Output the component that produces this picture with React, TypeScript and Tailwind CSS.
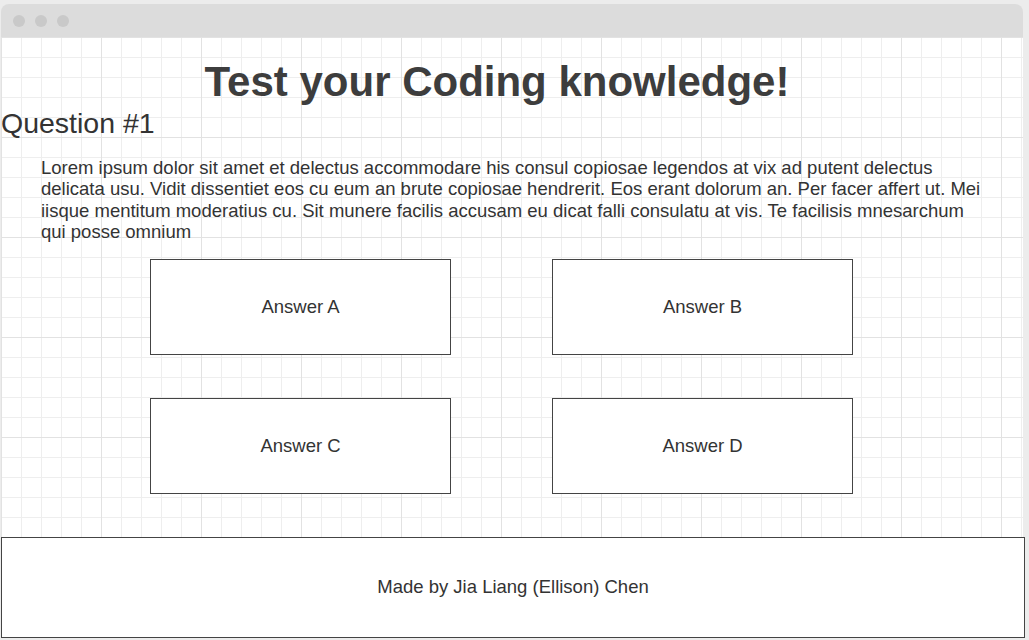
import React from "react";

const answers = ["Answer A", "Answer B", "Answer C", "Answer D"];

const lorem =
  "Lorem ipsum dolor sit amet et delectus accommodare his consul copiosae legendos at vix ad putent delectus delicata usu. Vidit dissentiet eos cu eum an brute copiosae hendrerit. Eos erant dolorum an. Per facer affert ut. Mei iisque mentitum moderatius cu. Sit munere facilis accusam eu dicat falli consulatu at vis. Te facilisis mnesarchum qui posse omnium";

function AnswerBox({ label }: { label: string }) {
  return (
    <button className="w-[301px] h-[96px] border border-[#444] bg-white flex items-center justify-center text-[18.5px] text-[#333]">
      {label}
    </button>
  );
}

export default function App() {
  return (
    <div className="w-[1029px] h-[640px] bg-[#ececec] overflow-hidden font-['Liberation_Sans',Arial,sans-serif] text-[#333]">
      <div className="ml-[1px] mt-[4px] w-[1022px]">
        {/* window title bar */}
        <div className="h-[33px] bg-[#dcdcdc] rounded-t-[8px] flex items-center gap-[10px] pl-[12px]">
          <span className="w-[12px] h-[12px] rounded-full bg-[#c9c9c9]" />
          <span className="w-[12px] h-[12px] rounded-full bg-[#c9c9c9]" />
          <span className="w-[12px] h-[12px] rounded-full bg-[#c9c9c9]" />
        </div>

        {/* grid paper content */}
        <div className="h-[601px] bg-white bg-[linear-gradient(to_right,#e2e2e2_1px,transparent_1px),linear-gradient(to_bottom,#e2e2e2_1px,transparent_1px),linear-gradient(to_right,#eeeeee_1px,transparent_1px),linear-gradient(to_bottom,#eeeeee_1px,transparent_1px)] bg-[size:100px_100px,100px_100px,20px_20px,20px_20px]">
          <div className="pt-[24px]">
            <h1 className="text-[42px] leading-[42px] font-bold text-[#3d3d3d] text-center pr-[30px]">
              Test your Coding knowledge!
            </h1>
            <h2 className="mt-[6px] text-[28.5px] leading-[28.5px] text-[#333]">Question #1</h2>
            <p className="mt-[19px] mx-[40px] text-[18.5px] leading-[21.5px] text-[#333]">{lorem}</p>

            <div className="mt-[16px] pl-[149px] grid grid-cols-[301px_301px] gap-x-[101px] gap-y-[43px]">
              {answers.map((a) => (
                <AnswerBox key={a} label={a} />
              ))}
            </div>

            <footer className="mt-[43px] w-[1024px] h-[101px] border border-[#444] bg-white flex items-center justify-center text-[18.5px] text-[#333]">
              Made by Jia Liang (Ellison) Chen
            </footer>
          </div>
        </div>
      </div>
    </div>
  );
}
